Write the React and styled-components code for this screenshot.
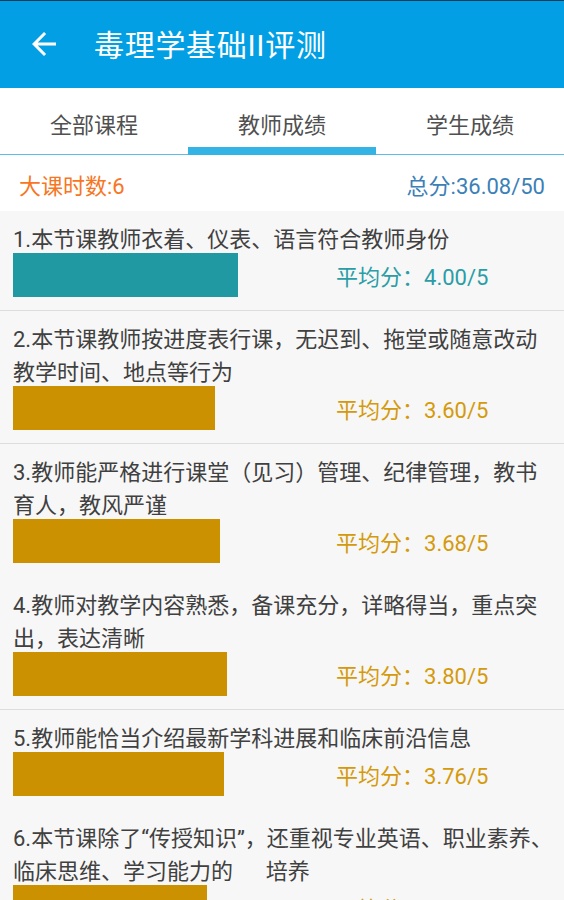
import React, { useState } from "react";
import styled, { createGlobalStyle } from "styled-components";

const GlobalStyle = createGlobalStyle`
    html, body {
        margin: 0;
        padding: 0;
        background: #F7F7F7;
    }
    body {
        font-family: Roboto, "Noto Sans CJK SC", "Noto Sans", sans-serif;
    }
`;

const Page = styled.div`
    width: 564px;
    height: 900px;
    overflow: hidden;
    background: #F7F7F7;
`;

const Header = styled.header`
    height: 87px;
    border-top: 1px solid #0D3B55;
    background: #039FE5;
    display: flex;
    align-items: center;
    padding-left: 26px;
    gap: 32px;
    color: #fff;
`;

const BackButton = styled.button`
    border: 0;
    padding: 0;
    background: none;
    width: 36px;
    height: 36px;
    display: flex;
    margin-top: -2px;
    svg {
        width: 36px;
        height: 36px;
        fill: #fff;
    }
`;

const Title = styled.h1`
    margin: -3px 0 0;
    font-size: 30px;
    font-weight: 400;
    letter-spacing: 0.7px;
`;

const Tabs = styled.nav`
    display: grid;
    grid-template-columns: repeat(3, 1fr);
    background: #fff;
    border-bottom: 1px solid #5DBDE8;
`;

const Tab = styled.div`
    height: 67px;
    display: flex;
    align-items: center;
    justify-content: center;
    padding-top: 10px;
    box-sizing: border-box;
    font-size: 22px;
    color: #505050;
    border-bottom: 8px solid ${props => props.active ? "#33B4E4" : "transparent"};
    margin-bottom: -1px;
    cursor: pointer;
`;

const Summary = styled.div`
    height: 56px;
    background: #fff;
    display: flex;
    align-items: center;
    justify-content: space-between;
    padding: 2px 19px 0 19px;
    box-sizing: border-box;
    font-size: 22px;
`;

const Hours = styled.span`
    color: #F7761F;
`;

const Total = styled.span`
    color: #3B80B7;
`;

const Item = styled.div`
    padding: 12px 9px 13px 13px;
    border-bottom: 1px solid ${props => props.divider ? "#DDDDDD" : "transparent"};
`;

const Question = styled.div`
    font-size: 22px;
    line-height: 33px;
    color: #404040;
    white-space: pre-wrap;
`;

const ScoreRow = styled.div`
    display: flex;
    align-items: center;
    margin-top: -3px;
`;

const BarTrack = styled.div`
    width: 281px;
    height: 44px;
    flex-shrink: 0;
`;

const Bar = styled.div`
    height: 100%;
    background: ${props => props.good ? "#2199A3" : "#CC9100"};
`;

const Average = styled.span`
    margin-left: 42px;
    font-size: 22px;
    white-space: nowrap;
    color: ${props => props.good ? "#2A9DA6" : "#D49A0C"};
`;

const tabs = ["全部课程", "教师成绩", "学生成绩"];

const questions = [
    { text: "1.本节课教师衣着、仪表、语言符合教师身份", score: 4.0, divider: true },
    { text: "2.本节课教师按进度表行课，无迟到、拖堂或随意改动教学时间、地点等行为", score: 3.6, divider: true },
    { text: "3.教师能严格进行课堂（见习）管理、纪律管理，教书育人，教风严谨", score: 3.68 },
    { text: "4.教师对教学内容熟悉，备课充分，详略得当，重点突出，表达清晰", score: 3.8, divider: true },
    { text: "5.教师能恰当介绍最新学科进展和临床前沿信息", score: 3.76 },
    { text: "6.本节课除了“传授知识”，还重视专业英语、职业素养、临床思维、学习能力的      培养", score: 3.45 },
];

const App = () => {
    const [active, setActive] = useState(1);

    return (
        <Page>
            <GlobalStyle />
            <Header>
                <BackButton aria-label="back">
                    <svg viewBox="0 0 24 24">
                        <path d="M20 11H7.83l5.59-5.59L12 4l-8 8 8 8 1.41-1.41L7.83 13H20v-2z" />
                    </svg>
                </BackButton>
                <Title>毒理学基础II评测</Title>
            </Header>
            <Tabs>
                {tabs.map((t, i) =>
                    <Tab key={t} active={i === active} onClick={() => setActive(i)}>{t}</Tab>
                )}
            </Tabs>
            <Summary>
                <Hours>大课时数:6</Hours>
                <Total>总分:36.08/50</Total>
            </Summary>
            {questions.map(q => {
                const good = q.score >= 4;
                return (
                    <Item key={q.text} divider={q.divider}>
                        <Question>{q.text}</Question>
                        <ScoreRow>
                            <BarTrack>
                                <Bar good={good} style={{ width: `${q.score / 5 * 100}%` }} />
                            </BarTrack>
                            <Average good={good}>平均分：{q.score.toFixed(2)}/5</Average>
                        </ScoreRow>
                    </Item>
                );
            })}
        </Page>
    );
};

export default App;
